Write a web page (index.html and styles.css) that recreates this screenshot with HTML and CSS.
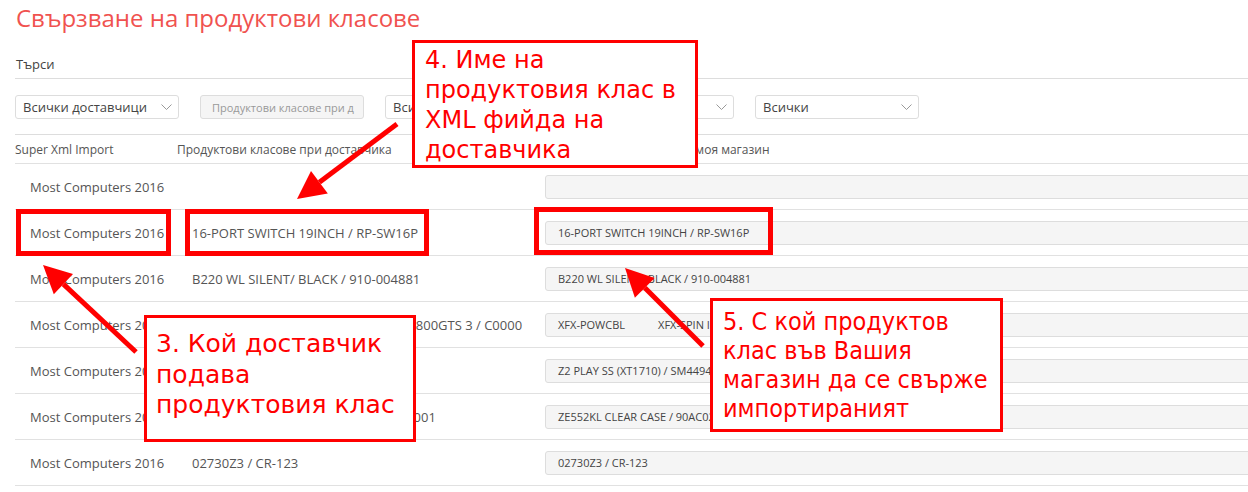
FILE: index.html
```html
<!DOCTYPE html>
<html lang="bg">
<head>
    <meta charset="UTF-8">
    <meta name="viewport" content="width=device-width, initial-scale=1.0">
    <title>Свързване на продуктови класове</title>
    <link rel="stylesheet" href="styles.css">
</head>
<body>
    <div class="page">
        <h1 class="title">Свързване на продуктови класове</h1>
        <div class="search-label">Търси</div>

        <div class="filters">
            <div class="select"><span>Всички доставчици</span><svg class="chev" viewBox="0 0 11 6"><path d="M0.5 0.5 L5.5 5.5 L10.5 0.5"/></svg></div>
            <div class="field">Продуктови класове при д</div>
            <div class="select"><span>Всички</span><svg class="chev" viewBox="0 0 11 6"><path d="M0.5 0.5 L5.5 5.5 L10.5 0.5"/></svg></div>
            <div class="select"><span>Всички</span><svg class="chev" viewBox="0 0 11 6"><path d="M0.5 0.5 L5.5 5.5 L10.5 0.5"/></svg></div>
            <div class="select"><span>Всички</span><svg class="chev" viewBox="0 0 11 6"><path d="M0.5 0.5 L5.5 5.5 L10.5 0.5"/></svg></div>
        </div>

        <div class="classes">
            <div class="row head">
                <div>Super Xml Import</div>
                <div>Продуктови класове при доставчика</div>
                <div class="head-shop">Продуктови класове в моя магазин</div>
            </div>
            <div class="row">
                <div class="cell">Most Computers 2016</div>
                <div class="cell"></div>
                <div class="cell"><div class="shop-input"></div></div>
            </div>
            <div class="row">
                <div class="cell">Most Computers 2016</div>
                <div class="cell">16-PORT SWITCH 19INCH / RP-SW16P</div>
                <div class="cell"><div class="shop-input">16-PORT SWITCH 19INCH / RP-SW16P</div></div>
            </div>
            <div class="row">
                <div class="cell">Most Computers 2016</div>
                <div class="cell">B220 WL SILENT/ BLACK / 910-004881</div>
                <div class="cell"><div class="shop-input">B220 WL SILENT/ BLACK / 910-004881</div></div>
            </div>
            <div class="row">
                <div class="cell">Most Computers 2016</div>
                <div class="cell">XFX-POWCBL XFX-SPIN II 850W+ PSU 800GTS 3 / C0000</div>
                <div class="cell"><div class="shop-input"><span class="tag">XFX-POWCBL</span><span class="tag">XFX-SPIN II 850W+ PSU 800GTS 3 / C0000</span></div></div>
            </div>
            <div class="row">
                <div class="cell">Most Computers 2016</div>
                <div class="cell">Z2 PLAY SS (XT1710) / SM4494</div>
                <div class="cell"><div class="shop-input">Z2 PLAY SS (XT1710) / SM4494AE</div></div>
            </div>
            <div class="row">
                <div class="cell">Most Computers 2016</div>
                <div class="cell">ZE552KL CLEAR CASE / 90AC02R0-BC001</div>
                <div class="cell"><div class="shop-input">ZE552KL CLEAR CASE / 90AC02R0-BC001</div></div>
            </div>
            <div class="row">
                <div class="cell">Most Computers 2016</div>
                <div class="cell">02730Z3 / CR-123</div>
                <div class="cell"><div class="shop-input">02730Z3 / CR-123</div></div>
            </div>
        </div>
    </div>

    <!-- анотации върху екранната снимка -->
    <div class="mark mark-supplier"></div>
    <div class="mark mark-class"></div>
    <div class="mark mark-shop"></div>

    <svg class="arrows" width="1248" height="492" viewBox="0 0 1248 492">
        <line x1="397" y1="124" x2="319.4" y2="182.2"/>
        <polygon points="297,199 311,171 327.8,193.4"/>
        <line x1="136" y1="352" x2="63.4" y2="284.1"/>
        <polygon points="43,265 73,273.9 53.8,294.3"/>
        <line x1="703" y1="346" x2="644.8" y2="287.8"/>
        <polygon points="625,268 654.7,277.9 634.9,297.7"/>
    </svg>

    <div class="note note-4">4. Име на<br>продуктовия клас в<br>XML фийда на<br>доставчика</div>
    <div class="note note-3">3. Кой доставчик<br>подава<br>продуктовия клас</div>
    <div class="note note-5">5. С кой продуктов<br>клас във Вашия<br>магазин да се свърже<br>импортираният</div>
</body>
</html>
```

FILE: styles.css
```css
html, body {
    margin: 0;
    height: 100%;
    overflow: hidden;
}

body {
    position: relative;
    font-family: "Open Sans", "Noto Sans", sans-serif;
    color: #555;
    background: #fff;
}

.page {
    padding-left: 15px;
    width: 1330px;
}

.title {
    margin: 1px 0 0 1px;
    font-size: 24px;
    font-weight: 400;
    line-height: 33px;
    color: #f0524f;
}

.search-label {
    margin-top: 21px;
    padding: 0 0 5px 1px;
    font-size: 13px;
    line-height: 18px;
    color: #444;
    border-bottom: 1px solid #ddd;
}

.filters {
    display: flex;
    gap: 21px;
    padding: 16px 0 15px;
    border-bottom: 1px solid #ddd;
}

.select, .field {
    box-sizing: border-box;
    width: 164px;
    height: 24px;
    border: 1px solid #ddd;
    border-radius: 3px;
    display: flex;
    align-items: center;
}

.select {
    justify-content: space-between;
    padding: 0 6px 0 7px;
    font-size: 13px;
    color: #444;
}

.chev {
    width: 11px;
    height: 6px;
    fill: none;
    stroke: #999;
    stroke-width: 1;
}

.field {
    padding-left: 11px;
    background: #f5f5f5;
    font-size: 11px;
    color: #999;
}

.row {
    display: grid;
    grid-template-columns: 162px 353px 1fr;
    border-bottom: 1px solid #e1e1e1;
}

.row.head {
    padding: 6px 0 4px;
    font-size: 12px;
    line-height: 18px;
    color: #555;
}

.head-shop {
    padding-left: 33px;
}

.cell {
    height: 45px;
    padding-left: 15px;
    display: flex;
    align-items: center;
    font-size: 13px;
    color: #555;
    white-space: nowrap;
}

.shop-input {
    box-sizing: border-box;
    width: 100%;
    height: 24px;
    padding-left: 12px;
    border: 1px solid #ddd;
    border-radius: 3px;
    background: #f5f5f5;
    display: flex;
    align-items: center;
    font-size: 11px;
    color: #444;
}

.tag {
    margin-right: 33px;
}

/* анотации */
.mark {
    position: absolute;
    box-sizing: border-box;
    border: 5px solid #f00;
}

.mark-supplier {
    left: 16px;
    top: 209px;
    width: 155px;
    height: 47px;
}

.mark-class {
    left: 185px;
    top: 209px;
    width: 244px;
    height: 47px;
}

.mark-shop {
    left: 534px;
    top: 207px;
    width: 239px;
    height: 48px;
}

.arrows {
    position: absolute;
    left: 0;
    top: 0;
    pointer-events: none;
}

.arrows line {
    stroke: #f00;
    stroke-width: 5;
}

.arrows polygon {
    fill: #f00;
}

.note {
    position: absolute;
    box-sizing: border-box;
    padding-left: 10px;
    border: 3px solid #f00;
    background: #fff;
    font-family: "DejaVu Sans", sans-serif;
    font-size: 24px;
    line-height: 30px;
    color: #f00;
    white-space: nowrap;
}

.note-4 {
    left: 412px;
    top: 40px;
    width: 286px;
    height: 128px;
    padding-top: 2px;
}

.note-3 {
    left: 144px;
    top: 315px;
    width: 272px;
    height: 127px;
    padding: 11px 0 0 9px;
    font-size: 25px;
    line-height: 30.5px;
}

.note-5 {
    left: 710px;
    top: 298px;
    width: 293px;
    height: 134px;
    padding-top: 6px;
    font-family: "DejaVu Sans Condensed", "DejaVu Sans", sans-serif;
    font-stretch: condensed;
    font-size: 25px;
    line-height: 29px;
}
```
